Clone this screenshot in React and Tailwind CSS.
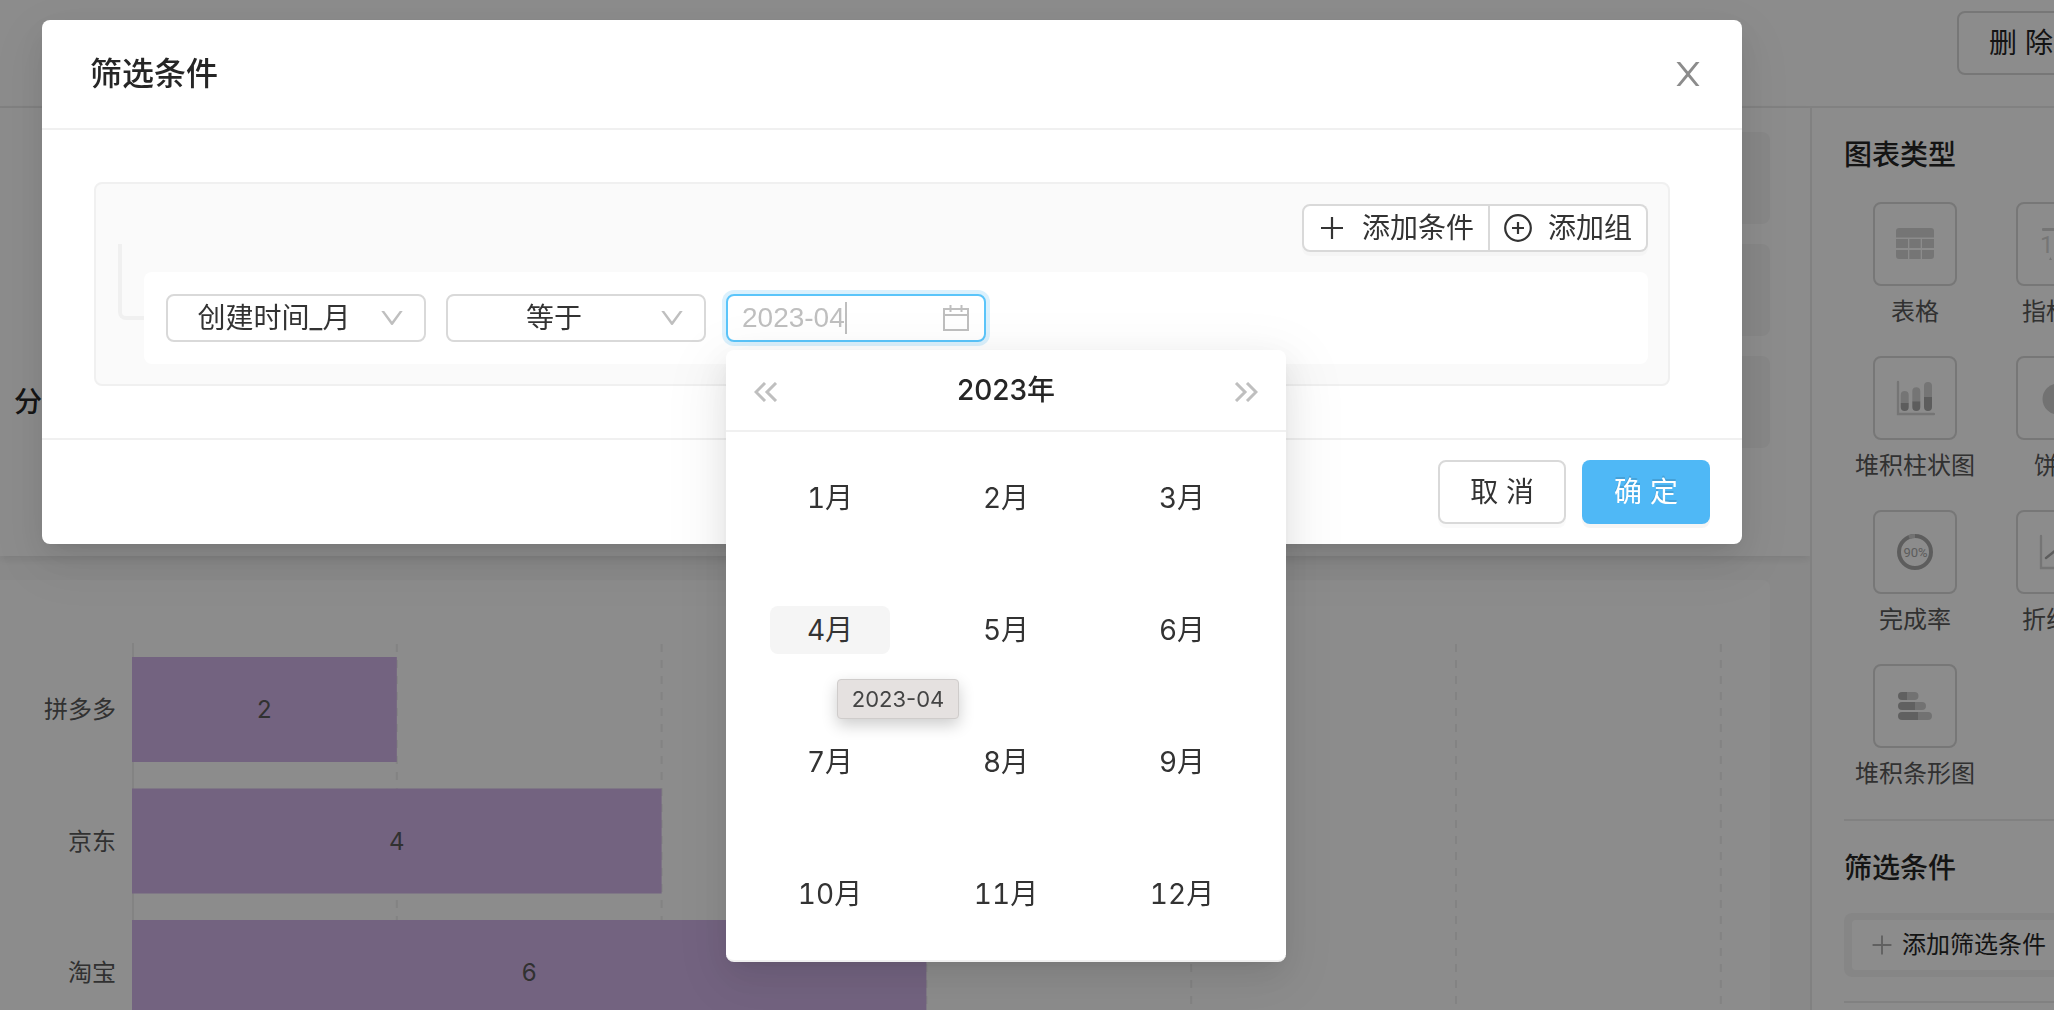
import { useState } from 'react';

const MONTHS = Array.from({ length: 12 }, (_, i) => i + 1);

const BARS = [
  { name: '拼多多', value: 2 },
  { name: '京东', value: 4 },
  { name: '淘宝', value: 6 },
];

// ─── Line icons ────────────────────────────────────────────────────────────────
const CloseIcon = () => (
  <svg width="24" height="24" viewBox="0 0 24 24" fill="#8c8c8c">
    <path d="M.5 0h3.6L12 9.6 19.9 0h3.6L13.8 12l9.7 12h-3.6L12 14.4 4.1 24H.5l9.7-12z" />
  </svg>
);

const DownIcon = ({ className }) => (
  <svg width="22" height="14" viewBox="0 0 22 14" fill="currentColor" className={className}>
    <path d="M.3 0h2.9L11 10.6 18.8 0h2.9L12 13.4a1.2 1.2 0 0 1-2 0z" />
  </svg>
);

const PlusIcon = ({ className }) => (
  <svg width="28" height="28" viewBox="0 0 28 28" fill="none" stroke="currentColor" strokeWidth="2.2" className={className}>
    <path d="M14 3v22M3 14h22" />
  </svg>
);

const PlusCircleIcon = () => (
  <svg width="28" height="28" viewBox="0 0 28 28" fill="none" stroke="currentColor" strokeWidth="2.2">
    <circle cx="14" cy="14" r="12.8" />
    <path d="M14 8v12M8 14h12" />
  </svg>
);

const CalendarIcon = () => (
  <svg width="28" height="28" viewBox="0 0 28 28" fill="none" stroke="#bfbfbf" strokeWidth="2" className="ml-auto">
    <path d="M2 5h24v21H2zM2 11h24M8.5 1v7M19.5 1v7" />
  </svg>
);

const DoubleArrow = ({ flip }) => (
  <svg width="24" height="20" viewBox="0 0 24 20" fill="none" stroke="currentColor" strokeWidth="3" className={flip ? 'rotate-180' : ''}>
    <path d="M11 1l-9 9 9 9M22 1l-9 9 9 9" />
  </svg>
);

// ─── Chart type icons ──────────────────────────────────────────────────────────
const TableIcon = () => (
  <svg width="38" height="32" viewBox="0 0 38 32" fill="#d6d6d6">
    <path d="M3 0h32a3 3 0 0 1 3 3v6.5H0V3a3 3 0 0 1 3-3z" />
    <path d="M0 11h12v9H0zM13.3 11h11.4v9H13.3zM26 11h12v9H26zM13.3 22h11.4v9H13.3z" />
    <path d="M0 22h12v9H3a3 3 0 0 1-3-3zM26 22h12v6a3 3 0 0 1-3 3h-9z" />
  </svg>
);

const MetricIcon = () => (
  <svg width="38" height="34" viewBox="0 0 38 34" fill="#d6d6d6">
    <rect x="3" y="1" width="32" height="3" rx="1" />
    <text x="1" y="26" fontSize="24" fontFamily="Roboto, sans-serif">123</text>
    <path d="M10 33l1.5-3 1.5 3zM15 33l1.5-3 1.5 3z" />
  </svg>
);

const StackedColumnIcon = () => (
  <svg width="40" height="36" viewBox="0 0 40 36">
    <path d="M3 2v32h36" fill="none" stroke="#d6d6d6" strokeWidth="2.4" strokeLinecap="round" />
    <path d="M5.7 23v-8a4 4 0 0 1 8 0v8zM17.3 21.3v-10a4 4 0 0 1 8 0v10zM29 17V6a4 4 0 0 1 8 0v11z" fill="#d6d6d6" />
    <path d="M5.7 23h8v4a4 4 0 0 1-8 0zM17.3 21.3h8V27a4 4 0 0 1-8 0zM29 17h8v10a4 4 0 0 1-8 0z" fill="#aaaaaa" />
  </svg>
);

const PieIcon = () => (
  <svg width="34" height="34" viewBox="0 0 34 34">
    <circle cx="17" cy="18" r="15.5" fill="#d0d0d0" />
  </svg>
);

const RateIcon = () => (
  <svg width="38" height="38" viewBox="0 0 38 38">
    <circle cx="19" cy="19" r="16" fill="none" stroke="#aaaaaa" strokeWidth="4" />
    <path d="M13 4.2a16 16 0 0 1 6-1.2" fill="none" stroke="#d0d0d0" strokeWidth="4" />
    <text x="19.5" y="24" fontSize="13" textAnchor="middle" fill="#aaaaaa" fontFamily="Liberation Sans Narrow, Roboto, sans-serif">90%</text>
  </svg>
);

const LineIcon = () => (
  <svg width="40" height="36" viewBox="0 0 40 36" fill="none" strokeLinecap="round">
    <path d="M3 2v32h36" stroke="#d6d6d6" strokeWidth="2.4" />
    <path d="M8 24l10-8 6 5 12-13" stroke="#aaaaaa" strokeWidth="2.4" />
  </svg>
);

const StackedBarIcon = () => (
  <svg width="36" height="30" viewBox="0 0 36 30">
    <path d="M10 1h7.5a4 4 0 0 1 0 8H10zM18 11h7a4 4 0 0 1 0 8h-7zM21 21h10a4 4 0 0 1 0 8H21z" fill="#d0d0d0" />
    <path d="M10 1H5a4 4 0 0 0 0 8h5zM18 11H5a4 4 0 0 0 0 8h13zM21 21H5a4 4 0 0 0 0 8h16z" fill="#b0b0b0" />
  </svg>
);

const CHART_ROWS = [
  [['表格', TableIcon], ['指标卡', MetricIcon]],
  [['堆积柱状图', StackedColumnIcon], ['饼图', PieIcon]],
  [['完成率', RateIcon], ['折线图', LineIcon]],
  [['堆积条形图', StackedBarIcon]],
];

// ─── Page behind the dialog ────────────────────────────────────────────────────
function BarChart() {
  return (
    <svg className="block w-full" height="430" role="img" aria-label="bar chart">
      <g stroke="#eeeeee" strokeWidth="2">
        <line x1="133" y1="63" x2="133" y2="430" />
        {[1, 2, 3, 4, 5, 6].map((i) => (
          <line key={i} x1={132 + i * 264.8} y1="64" x2={132 + i * 264.8} y2="430" strokeDasharray="8 8" />
        ))}
      </g>
      {BARS.map(({ name, value }, i) => {
        const y = 77 + i * 131.5;
        const w = value * 132.4;
        return (
          <g key={name} fontSize="24" fill="#595959">
            <rect x="132" y={y} width={w} height="105" fill="#d1b4e9" />
            <text x="116" y={y + 61} textAnchor="end">{name}</text>
            <text x={132 + w / 2} y={y + 61} textAnchor="middle">{value}</text>
          </g>
        );
      })}
    </svg>
  );
}

function Sidebar() {
  return (
    <aside className="w-[494px] shrink-0 border-l-2 border-[#ececec] bg-white pl-8">
      <h2 className="pt-[25px] pb-[25px] text-[28px]/[44px] font-medium text-[#262626]">图表类型</h2>
      <div className="flex flex-col gap-[26px] border-b-2 border-[#ececec] pb-[27px]">
        {CHART_ROWS.map((row, i) => (
          <div key={i} className="flex gap-px">
            {row.map(([label, Icon]) => (
              <button key={label} type="button" className="flex w-[142px] flex-col items-center gap-2">
                <span className="flex size-[84px] items-center justify-center rounded-lg border-2 border-[#d9d9d9]">
                  <Icon />
                </span>
                <span className="text-2xl/9 whitespace-nowrap text-[#595959]">{label}</span>
              </button>
            ))}
          </div>
        ))}
      </div>
      <h2 className="pt-[25px] pb-[23px] text-[28px]/[44px] font-medium text-[#262626]">筛选条件</h2>
      <div className="border-b-2 border-[#ececec] pb-6">
        <div className="rounded-lg bg-[#f5f5f5] px-2 py-[7px]">
          <button type="button" className="flex h-[50px] w-full items-center gap-2 rounded bg-white pl-[18px] text-2xl text-[#262626]">
            <PlusIcon className="size-6 text-[#b0b0b0]" />
            添加筛选条件
          </button>
        </div>
      </div>
    </aside>
  );
}

function Page() {
  return (
    <div className="flex h-full min-w-[2304px] flex-col">
      <header className="flex h-[108px] shrink-0 justify-end border-b-2 border-[#ececec] bg-white pt-[11px] pr-[219px]">
        <button type="button" className="h-16 rounded-lg border-2 border-[#d9d9d9] px-[30px] text-[28px] text-[#262626]">删 除</button>
      </header>
      <div className="flex min-h-0 flex-1">
        <main className="flex min-w-0 flex-1 flex-col bg-[#fafafa]">
          <section className="flex flex-col gap-5 bg-white pt-6 pr-10 pb-[108px] pl-[14px] shadow-[0_4px_8px_rgba(0,0,0,0.08)]">
            {['', '', '分'].map((label, i) => (
              <div key={i} className="flex h-[92px] items-center gap-8">
                <span className="w-28 text-[28px] font-medium text-[#262626]">{label}</span>
                <div className="h-full flex-1 rounded-lg bg-[#f5f5f5]" />
              </div>
            ))}
          </section>
          <section className="mt-6 mr-10 flex-1 rounded-tr-lg bg-white">
            <BarChart />
          </section>
        </main>
        <Sidebar />
      </div>
    </div>
  );
}

// ─── Month picker ──────────────────────────────────────────────────────────────
function MonthPanel({ onPick }) {
  return (
    <div className="absolute top-full left-0 z-10 mt-2 w-[560px] rounded-lg border-b-2 border-[#f0f0f0] bg-white shadow-[0_6px_12px_-8px_rgba(0,0,0,0.12),0_12px_32px_rgba(0,0,0,0.08),0_18px_56px_16px_rgba(0,0,0,0.05)]">
      <div className="flex h-[82px] items-center justify-between border-b-2 border-[#f0f0f0] px-7 text-[#bfbfbf]">
        <button type="button" aria-label="上一年" className="pt-1"><DoubleArrow /></button>
        <button type="button" className="text-[28px] font-medium text-[#262626]">2023年</button>
        <button type="button" aria-label="下一年" className="pt-1"><DoubleArrow flip /></button>
      </div>
      <div className="grid grid-cols-3 px-4">
        {MONTHS.map((m) => (
          <div key={m} className="relative flex h-[132px] items-center justify-center">
            <button
              type="button"
              onClick={() => onPick(m)}
              className={`h-12 w-[120px] rounded-lg text-[28px] text-[#333333] tabular-nums ${m === 4 ? 'bg-[#f5f5f5]' : ''}`}
            >
              {m}月
            </button>
            {m === 4 && (
              <div role="tooltip" className="absolute top-[115px] left-[95px] z-10 flex h-10 w-[122px] items-center justify-center rounded-sm border border-[#cfcccb] bg-[#e5e1e0] text-[22px] text-[#444444] shadow-[0_6px_16px_rgba(0,0,0,0.2)]">
                2023-04
              </div>
            )}
          </div>
        ))}
      </div>
    </div>
  );
}

function Select({ label, value }) {
  return (
    <div className="relative">
      <select aria-label={label} defaultValue={value} className="h-12 w-[260px] appearance-none rounded-lg border-2 border-[#d9d9d9] bg-white pr-16 pl-5 text-center text-[28px]/[40px] text-[#333333] [text-align-last:center]">
        <option>{value}</option>
      </select>
      <DownIcon className="pointer-events-none absolute top-[17px] right-[23px] text-[#bfbfbf]" />
    </div>
  );
}

function FilterDialog() {
  const [month, setMonth] = useState('');

  return (
    <div role="dialog" aria-label="筛选条件" className="mt-5 mr-[312px] ml-[42px] flex-1 rounded-lg bg-white shadow-[0_6px_12px_-8px_rgba(0,0,0,0.12),0_12px_32px_rgba(0,0,0,0.08),0_18px_56px_16px_rgba(0,0,0,0.05)]">
      <div className="flex h-[110px] items-center justify-between border-b-2 border-[#f0f0f0] pr-[42px] pl-12">
        <h1 className="text-[32px] font-medium text-[#262626]">筛选条件</h1>
        <button type="button" aria-label="关闭">
          <CloseIcon />
        </button>
      </div>

      <div className="py-[52px] pr-[72px] pl-[52px]">
        <div className="rounded-lg border-2 border-[#f0f0f0] bg-[#fafafa] p-5">
          <div className="flex h-12 justify-end text-[28px] text-[#333333]">
            <button type="button" className="flex items-center gap-4 rounded-l-lg border-2 border-[#d9d9d9] bg-white px-[14px] shadow-[0_4px_0_rgba(0,0,0,0.02)]">
              <PlusIcon />
              添加条件
            </button>
            <button type="button" className="flex items-center gap-4 rounded-r-lg border-2 border-l-0 border-[#d9d9d9] bg-white px-[14px] shadow-[0_4px_0_rgba(0,0,0,0.02)]">
              <PlusCircleIcon />
              添加组
            </button>
          </div>
          <div className="flex">
            <div className="-mt-2 ml-0.5 h-[76px] w-[26px] rounded-bl-lg border-b-4 border-l-4 border-[#f0f0f0]" />
            <div className="mt-5 flex flex-1 gap-5 rounded-lg bg-white p-[22px]">
              <Select label="字段" value="创建时间_月" />
              <Select label="条件" value="等于" />
              <div className="relative">
                <div className="flex h-12 w-[260px] items-center rounded-lg border-2 border-[#5bc5fa] bg-white px-[14px] shadow-[0_0_0_4px_rgba(77,184,245,0.2)]">
                  <input
                    aria-label="月份"
                    placeholder="2023-04"
                    value={month}
                    onChange={(e) => setMonth(e.target.value)}
                    className="w-[105px] border-r-2 border-[#bfbfbf] font-['Liberation_Sans',sans-serif] text-[28px]/[32px] outline-none placeholder:text-[#bfbfbf]"
                  />
                  <CalendarIcon />
                </div>
                <MonthPanel onPick={(m) => setMonth(`2023-${String(m).padStart(2, '0')}`)} />
              </div>
            </div>
          </div>
        </div>
      </div>

      <div className="flex justify-end gap-4 border-t-2 border-[#f0f0f0] py-5 pr-8 text-[28px]">
        <button type="button" className="h-16 rounded-lg border-2 border-[#d9d9d9] bg-white px-[30px] text-[#333333] shadow-[0_4px_0_rgba(0,0,0,0.02)]">取 消</button>
        <button type="button" className="h-16 rounded-lg bg-[#4fb8f6] px-8 text-white shadow-[0_4px_0_rgba(0,0,0,0.04)] text-shadow-[0_-2px_0_rgba(0,0,0,0.12)]">确 定</button>
      </div>
    </div>
  );
}

export default function App() {
  return (
    <div className="relative h-screen overflow-hidden bg-white font-[Inter,'Noto_Sans_CJK_SC',sans-serif]">
      <Page />
      <div className="fixed inset-0 flex items-start bg-black/45">
        <FilterDialog />
      </div>
    </div>
  );
}
